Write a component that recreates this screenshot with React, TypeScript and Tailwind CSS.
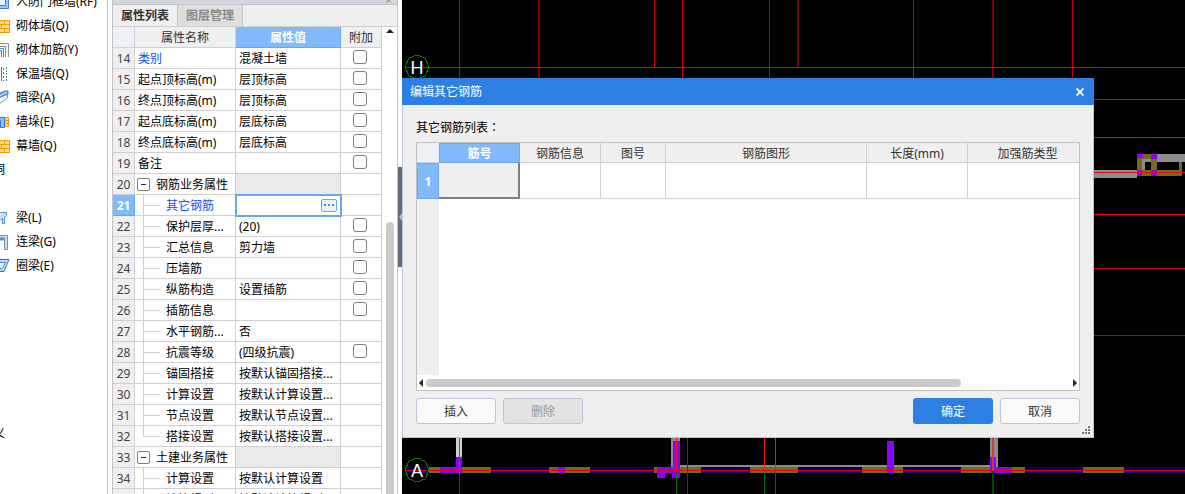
import React from "react";

type Row = {
  no: number;
  name: string;
  value?: string;
  check?: boolean;
  kind?: "group" | "child" | "last";
  link?: boolean;
  selected?: boolean;
};

const rows: Row[] = [
  { no: 14, name: "类别", value: "混凝土墙", check: true, link: true },
  { no: 15, name: "起点顶标高(m)", value: "层顶标高", check: true },
  { no: 16, name: "终点顶标高(m)", value: "层顶标高", check: true },
  { no: 17, name: "起点底标高(m)", value: "层底标高", check: true },
  { no: 18, name: "终点底标高(m)", value: "层底标高", check: true },
  { no: 19, name: "备注", check: true },
  { no: 20, name: "钢筋业务属性", kind: "group" },
  { no: 21, name: "其它钢筋", kind: "child", link: true, selected: true },
  { no: 22, name: "保护层厚...", value: "(20)", check: true, kind: "child" },
  { no: 23, name: "汇总信息", value: "剪力墙", check: true, kind: "child" },
  { no: 24, name: "压墙筋", check: true, kind: "child" },
  { no: 25, name: "纵筋构造", value: "设置插筋", check: true, kind: "child" },
  { no: 26, name: "插筋信息", check: true, kind: "child" },
  { no: 27, name: "水平钢筋...", value: "否", kind: "child" },
  { no: 28, name: "抗震等级", value: "(四级抗震)", check: true, kind: "child" },
  { no: 29, name: "锚固搭接", value: "按默认锚固搭接...", kind: "child" },
  { no: 30, name: "计算设置", value: "按默认计算设置...", kind: "child" },
  { no: 31, name: "节点设置", value: "按默认节点设置...", kind: "child" },
  { no: 32, name: "搭接设置", value: "按默认搭接设置...", kind: "last" },
  { no: 33, name: "土建业务属性", kind: "group" },
  { no: 34, name: "计算设置", value: "按默认计算设置", kind: "child" },
  { no: 35, name: "计算规则", value: "按默认计算规则", kind: "child" },
];

const tools = [
  { icon: "frame", label: "人防门框墙(RF)" },
  { icon: "brick", label: "砌体墙(Q)" },
  { icon: "rebar", label: "砌体加筋(Y)" },
  { icon: "insulate", label: "保温墙(Q)" },
  { icon: "hidden", label: "暗梁(A)" },
  { icon: "pier", label: "墙垛(E)" },
  { icon: "brick", label: "幕墙(Q)" },
  { icon: "", label: "洞" },
  { icon: "", label: "" },
  { icon: "beam", label: "梁(L)" },
  { icon: "link", label: "连梁(G)" },
  { icon: "ring", label: "圈梁(E)" },
  { icon: "", label: "" },
  { icon: "", label: "" },
  { icon: "", label: "" },
  { icon: "", label: "" },
  { icon: "", label: "" },
  { icon: "", label: "" },
  { icon: "", label: "义" },
];

const ToolIcon = ({ name }: { name: string }) => (
  <svg className="-ml-1.5 h-4 w-4 shrink-0" viewBox="0 0 16 16" fill="none">
    {name === "frame" && (
      <g stroke="#3f80cf">
        <path d="M0.5 0.5H14.5V14.5H0.5Z" fill="#9cc5f2" />
        <path d="M3.5 0.5H11.5V11.5H3.5Z" fill="#e4f0fc" />
      </g>
    )}
    {name === "brick" && (
      <g stroke="#ee9c0c">
        <path d="M0.5 2.5H15.5V14.5H0.5Z" fill="#ffd98a" />
        <path d="M0 6.5H16M0 10.5H16M10.5 2.5V6.5M7.5 6.5V10.5M10.5 10.5V14.5" />
      </g>
    )}
    {name === "rebar" && (
      <>
        <path d="M0 1.5H14.5V15M0 4.5H11.5V15" stroke="#87909a" />
        <path d="M0 3H13V15" stroke="#e3e6ea" />
        <path d="M0 6.5H9.5V15M0 8.5H7.5V15" stroke="#3f86d8" />
      </>
    )}
    {name === "insulate" && (
      <>
        <path d="M7.5 1V15" stroke="#3f86d8" />
        <path d="M9.5 2V15" stroke="#2d6fc0" strokeDasharray="2 2" />
        <path d="M12.5 1V15" stroke="#3f86d8" strokeDasharray="2 1" />
      </>
    )}
    {name === "hidden" && (
      <>
        <path d="M2 6L13.5 1.5V8L4 14.5" fill="#fff" stroke="#8a929b" />
        <path d="M1 5L11 1H14V4L4 8Z" fill="#6eabee" stroke="#3c7fcd" />
        <path d="M5 6L13 2.5" stroke="#cfe4fb" />
      </>
    )}
    {name === "pier" && (
      <>
        <path d="M9.5 3.5H14.5V12.5H9.5Z" fill="#ffd27a" stroke="#ee9c0c" />
        <path d="M10 6.5H14M10 9.5H14" stroke="#ee9c0c" />
        <path d="M0.5 3.5H10.5V13.5H6.5V6.5H0.5Z" fill="#8fc0f5" stroke="#2f74c6" />
      </>
    )}
    {name === "beam" && (
      <>
        <path d="M2 2.5H12.5V5L10.5 7V13.5H8.5V8L4 12" fill="#e2effd" stroke="#4a8bd8" />
        <path d="M4 9L11 3M3 5.5L7 2.5" stroke="#86b4e8" />
      </>
    )}
    {name === "link" && (
      <>
        <path d="M0 1.5H13.5V15.5H10.5V6" fill="#d5d9dd" stroke="#838c95" />
        <path d="M0 3.5H11V6.5H0Z" fill="#4b93e6" />
      </>
    )}
    {name === "ring" && (
      <>
        <path d="M2 1.5H15L10 13.5H1" fill="#b6d5f6" stroke="#2f74c6" />
        <path d="M3 4.5H11.5L8 10.5H1" fill="#fff" stroke="#3f86d8" />
      </>
    )}
  </svg>
);

const Toolbox = () => (
  <nav className="w-[108px] shrink-0 overflow-hidden border-r border-[#bdbdbd] bg-white">
    <ul className="-mt-2.5">
      {tools.map((tool, i) => (
        <li key={i} className="flex h-6 items-center gap-1.5 whitespace-nowrap">
          {tool.icon && <ToolIcon name={tool.icon} />}
          <span className={tool.icon ? "" : "-ml-[7px]"}>{tool.label}</span>
        </li>
      ))}
    </ul>
  </nav>
);

const NameCell = ({ row }: { row: Row }) => {
  const color = row.link ? "text-[#0b4dff]" : "text-black";
  if (row.kind === "group") {
    return (
      <div className="flex h-5 items-center gap-1.5 pl-0.5">
        <button
          type="button"
          aria-label="折叠"
          className="flex h-[13px] w-[13px] shrink-0 items-center justify-center rounded-[2px] border border-[#808080] bg-white"
        >
          <span className="h-px w-[5px] bg-[#333]" />
        </button>
        <span className="pt-0.5">{row.name}</span>
      </div>
    );
  }
  if (row.kind) {
    return (
      <div className="flex h-5 items-center pl-2">
        <span className={`w-px shrink-0 self-start bg-[#d0d0d0] ${row.kind === "last" ? "h-[11px]" : "h-[21px]"}`} />
        <span className="h-px w-4 shrink-0 bg-[#d0d0d0]" />
        <span className={`pt-0.5 pl-1.5 ${color}`}>{row.name}</span>
      </div>
    );
  }
  return <div className={`pt-0.5 pl-[3px] ${color}`}>{row.name}</div>;
};

const PropertyPanel = () => (
  <section className="ml-1 flex w-[286px] shrink-0 flex-col overflow-hidden border-x border-[#c3c3c3] bg-white">
    <div className="flex h-[5px] shrink-0 justify-end border-b border-[#bfc2c8] bg-[#d4d6dc] pr-1">
      <svg className="h-1 w-2" viewBox="0 0 8 4">
        <path d="M1 2.5L3.5 0L6 2.5" stroke="#777" fill="none" />
      </svg>
    </div>
    <div className="flex h-[22px] shrink-0 border-b border-[#cfcfcf] bg-[#efefef] font-bold">
      <button type="button" className="w-16 text-[#333]">属性列表</button>
      <button type="button" className="w-[66px] border-x border-[#c6c6c6] bg-[#dedede] text-[#888]">
        图层管理
      </button>
    </div>
    <div className="flex min-h-0 flex-1">
      <div className="flex-1 overflow-hidden">
        <table className="w-full table-fixed border-separate border-spacing-0">
          <thead>
            <tr className="h-[21px] bg-[#efefef] text-[#333]">
              <th className="w-[22px] border-r border-b border-[#d0d0d0] bg-[#edf1f7] p-0" />
              <th className="w-[101px] border-r border-b border-[#d0d0d0] px-0 pt-0.5 pb-0 font-normal">属性名称</th>
              <th className="w-[105px] border-r border-b border-[#68a8ec] bg-[#80bafa] px-0 pt-0.5 pb-0 font-bold text-white">
                属性值
              </th>
              <th className="border-r border-b border-[#d0d0d0] px-0 pt-0.5 pb-0 font-normal">附加</th>
            </tr>
          </thead>
          <tbody>
            {rows.map((row) => (
              <tr key={row.no} className="h-[21px]">
                <th
                  className={
                    row.selected
                      ? "border-r border-b border-[#68a8ec] bg-[#80bafa] px-0 pt-0.5 pb-0 font-bold text-white"
                      : "border-r border-b border-[#d0d0d0] bg-[#efefef] px-0 pt-0.5 pb-0 font-normal text-[#444]"
                  }
                >
                  {row.no}
                </th>
                <td className="border-r border-b border-[#d0d0d0] p-0 whitespace-nowrap">
                  <NameCell row={row} />
                </td>
                <td
                  className={`border-r border-b border-[#d0d0d0] p-0 whitespace-nowrap ${
                    row.kind === "group" ? "bg-[#e9e9e9]" : ""
                  } ${row.selected ? "outline-2 -outline-offset-1 outline-[#68a8ec]" : ""}`}
                >
                  {row.selected ? (
                    <div className="flex h-5 items-center justify-end pr-[3px]">
                      <button
                        type="button"
                        aria-label="更多"
                        className="flex h-[13px] w-4 items-center justify-center gap-0.5 rounded-[2px] border border-[#68a8ec] bg-[#eaf3fd]"
                      >
                        <span className="h-0.5 w-0.5 bg-[#4a86c8]" />
                        <span className="h-0.5 w-0.5 bg-[#4a86c8]" />
                        <span className="h-0.5 w-0.5 bg-[#4a86c8]" />
                      </button>
                    </div>
                  ) : (
                    <div className="pt-0.5 pl-[3px]">{row.value}</div>
                  )}
                </td>
                <td className="border-r border-b border-[#d0d0d0] pt-0 pr-0.5 pb-0.5 pl-0">
                  {row.check && (
                    <input
                      type="checkbox"
                      aria-label={row.name}
                      className="mx-auto block h-3.5 w-3.5 appearance-none rounded-[3px] border border-[#808080] bg-white"
                    />
                  )}
                </td>
              </tr>
            ))}
          </tbody>
        </table>
      </div>
      <div className="flex w-[15px] shrink-0 flex-col items-center pt-0.5">
        <svg className="h-1 w-2" viewBox="0 0 8 4">
          <path d="M0 4L4 0L8 4Z" fill="#222" />
        </svg>
        <div className="mt-[189px] w-2 flex-1 rounded-t-full bg-[#cbcbcb]" />
      </div>
    </div>
  </section>
);

const Splitter = () => (
  <div className="w-1 shrink-0 bg-white pt-[167px]">
    <div className="flex h-[100px] items-center bg-[#626d7b]">
      <svg className="h-2 w-1" viewBox="0 0 4 8">
        <path d="M4 0L1 4L4 8Z" fill="#b9c0c8" />
      </svg>
    </div>
  </div>
);

// [x, width, colour, bottom]
const axes: [number, number, string, number][] = [
  [459, 1, "#d80000", 78],
  [538, 2, "#800000", 78],
  [654, 1, "#d80000", 67],
  [682, 1, "#d80000", 78],
  [769, 1, "#c80000", 78],
  [797, 2, "#800000", 67],
  [913, 1, "#d80000", 78],
  [992, 2, "#800000", 78],
  [1072, 1, "#c80000", 78],
];

// [x, width] of the wall openings in axis A
const olive = [
  [429, 62], [549, 41], [654, 47], [750, 48], [862, 41], [961, 64], [1083, 41],
];

const Drawing = () => (
  <svg className="absolute top-0 left-0 h-[494px] w-[783px] max-w-none" viewBox="402 0 783 494" shapeRendering="crispEdges">
    {axes.map(([x, w, color, bottom]) => (
      <rect key={x} x={x} y="0" width={w} height={bottom} fill={color} />
    ))}
    <rect x="405" y="67" width="780" height="1" fill="#f00000" />
    {[99, 137, 214].map((y) => (
      <rect key={y} x="1094" y={y} width="91" height="1" fill="#f00000" />
    ))}
    {[268, 335].map((y) => (
      <rect key={y} x="1094" y={y} width="91" height="1" fill="#c40000" />
    ))}

    <rect x="1094" y="170" width="43" height="8" fill="#8c8c8c" />
    <rect x="1137" y="154" width="48" height="8" fill="#8c8c8c" />
    <rect x="1137" y="154" width="5" height="22" fill="#6e6e14" />
    <rect x="1137" y="154" width="14" height="5" fill="#6e6e14" />
    <rect x="1142" y="159" width="9" height="11" fill="#8c8c8c" />
    <rect x="1145" y="162" width="6" height="8" fill="#000" />
    <rect x="1151" y="154" width="6" height="22" fill="#6e6e14" />
    <rect x="1137" y="170" width="45" height="6" fill="#6e6e14" />
    <rect x="1179" y="162" width="3" height="14" fill="#6e6e14" />
    <rect x="1137" y="154" width="6" height="4" fill="#8b00ff" />
    <rect x="1151" y="154" width="6" height="5" fill="#8b00ff" />
    <rect x="1137" y="170" width="5" height="6" fill="#8b00ff" />
    <rect x="1151" y="170" width="6" height="6" fill="#8b00ff" />
    <rect x="1094" y="172" width="91" height="1" fill="#e01010" />

    <rect x="680" y="465" width="311" height="2" fill="#8c8c8c" />
    <rect x="406" y="467" width="779" height="6" fill="#000070" />
    {olive.map(([x, w]) => (
      <rect key={x} x={x} y="467" width={w} height="6" fill="#6e6e14" />
    ))}
    <rect x="456" y="438" width="6" height="19" fill="#d0d0d0" />
    <rect x="671" y="438" width="9" height="29" fill="#8c8c8c" />
    <rect x="990" y="438" width="8" height="29" fill="#8c8c8c" />
    <path
      fill="#8b00ff"
      d="M440 467H456V457H462V473H440ZM558 467H565V473H558ZM657 467H673V441H680V478H672V473H665V478H657ZM887 441H894V473H887ZM990 457H996V467H1012V473H990Z"
    />
    <rect x="406" y="470" width="779" height="1" fill="#e00010" />
    {[459, 676, 764, 775].map((x) => (
      <g key={x}>
        <rect x={x} y="438" width="1" height="33" fill="#ff1010" />
        <rect x={x} y="471" width="1" height="23" fill="#007000" />
      </g>
    ))}
    <rect x="687" y="438" width="1" height="33" fill="#b80000" />
    <rect x="687" y="471" width="1" height="23" fill="#006000" />
    <rect x="992" y="438" width="2" height="33" fill="#c83c3c" />
    <rect x="992" y="471" width="2" height="23" fill="#004600" />

    <g fill="none" stroke="#008000">
      <path d="M417 55L425 58L429 67L425 76L417 79L409 76L405 67L409 58Z" />
      <path d="M417 458L425 461L429 470L425 479L417 482L409 479L405 470L409 461Z" />
    </g>
    <g fill="#fff" fontSize="18" textAnchor="middle" fontFamily="Liberation Sans, sans-serif">
      <text x="417" y="74">H</text>
      <text x="417" y="477">A</text>
    </g>
  </svg>
);

const headers = [
  { title: "钢筋信息", width: "w-[81px]" },
  { title: "图号", width: "w-[65px]" },
  { title: "钢筋图形", width: "" },
  { title: "长度(mm)", width: "w-[101px]" },
  { title: "加强筋类型", width: "w-[111px] pl-2" },
];

const RebarDialog = () => (
  <div role="dialog" aria-labelledby="dialog-title" className="absolute top-[78px] right-[91px] left-0 bg-[#efefef]">
    <div className="flex h-[27px] items-center justify-between bg-[#2d80e3] px-2 text-white">
      <h2 id="dialog-title">编辑其它钢筋</h2>
      <button type="button" aria-label="关闭" className="flex h-4 w-3 items-center justify-center">
        <svg className="h-2 w-2" viewBox="0 0 8 8">
          <path d="M0.5 0.5L7.5 7.5M7.5 0.5L0.5 7.5" stroke="#fff" strokeWidth="1.8" />
        </svg>
      </button>
    </div>
    <div className="relative border-x border-b border-[#bcc6d8] px-[13px] pt-3 pb-[13px]">
      <p className="h-[25px] leading-5 text-black">
        其它钢筋列表<span className="font-['Noto_Sans_CJK_TC',sans-serif]" lang="zh-TW">：</span>
      </p>
      <div className="flex h-[249px] flex-col border border-[#c0c0c0] bg-white">
        <table className="w-full table-fixed border-separate border-spacing-0">
          <thead>
            <tr className="h-5 bg-[#efefef] text-[#333]">
              <th className="w-[22px] border-b border-[#d0d0d0] bg-[#edf1f7] p-0" />
              <th className="w-[81px] border border-[#68a8ec] bg-[#80bafa] px-0 pt-0.5 pb-0 font-bold text-white">
                筋号
              </th>
              {headers.map((h) => (
                <th
                  key={h.title}
                  className={`border-r border-b border-[#d0d0d0] px-0 pt-0.5 pb-0 font-normal last:border-r-0 ${h.width}`}
                >
                  {h.title}
                </th>
              ))}
            </tr>
          </thead>
          <tbody>
            <tr className="h-9">
              <th className="border border-[#68a8ec] bg-[#80bafa] px-0 pt-0.5 pb-0 font-bold text-white">1</th>
              <td className="border-r-2 border-b-2 border-[#808080] bg-[#efefef] p-0" />
              {headers.map((h) => (
                <td key={h.title} className="border-r border-b border-[#d0d0d0] p-0 last:border-r-0" />
              ))}
            </tr>
          </tbody>
        </table>
        <div className="w-[22px] flex-1 bg-[#efefef]" />
        <div className="flex h-[15px] items-center justify-between px-0.5">
          <svg className="h-2 w-1" viewBox="0 0 4 8">
            <path d="M4 0L0 4L4 8Z" fill="#222" />
          </svg>
          <div className="flex-1 px-[3px]">
            <div className="h-2 w-[83%] rounded-full bg-[#cbcbcb]" />
          </div>
          <svg className="h-2 w-1" viewBox="0 0 4 8">
            <path d="M0 0L4 4L0 8Z" fill="#222" />
          </svg>
        </div>
      </div>
      <div className="mt-[7px] flex gap-[7px] text-[#333]">
        <button type="button" className="h-[26px] w-20 rounded-[3px] border border-[#bcc6d8] bg-[#fafafa] pt-0.5">
          插入
        </button>
        <button
          type="button"
          disabled
          className="h-[26px] w-20 rounded-[3px] border border-[#bcc6d8] bg-[#e3e3e3] pt-0.5 text-[#999]"
        >
          删除
        </button>
        <button type="button" className="ml-auto h-[26px] w-20 rounded-[3px] bg-[#2d80e3] pt-0.5 text-white">
          确定
        </button>
        <button type="button" className="h-[26px] w-20 rounded-[3px] border border-[#bcc6d8] bg-[#fafafa] pt-0.5">
          取消
        </button>
      </div>
      <svg className="absolute right-[3px] bottom-[3px] h-2 w-2" viewBox="0 0 8 8" fill="#6c7480">
        <path d="M6 0h2v2h-2zM3 3h2v2h-2zM6 3h2v2h-2zM0 6h2v2h-2zM3 6h2v2h-2zM6 6h2v2h-2z" />
      </svg>
    </div>
  </div>
);

export default function App() {
  return (
    <div className="flex h-screen overflow-hidden bg-white font-['Noto_Sans','Noto_Sans_CJK_SC',sans-serif] text-[12px] leading-4 text-black">
      <Toolbox />
      <PropertyPanel />
      <Splitter />
      <main className="relative flex-1 overflow-hidden bg-black">
        <Drawing />
        <RebarDialog />
      </main>
    </div>
  );
}
